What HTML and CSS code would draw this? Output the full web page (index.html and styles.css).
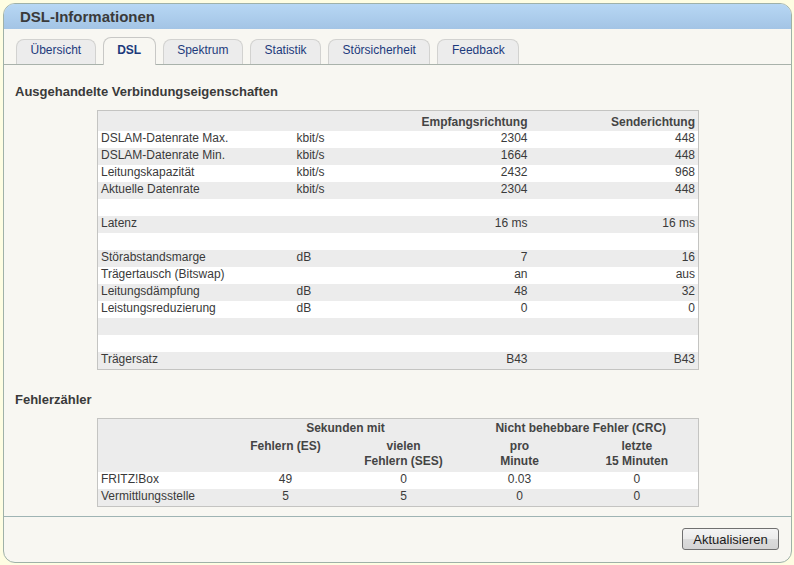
FILE: index.html
```html
<!DOCTYPE html>
<html lang="de">
<head>
<meta charset="utf-8">
<title>DSL-Informationen</title>
<link rel="stylesheet" href="styles.css">
</head>
<body>
<div class="panel">
  <div class="panel-head">DSL-Informationen</div>
  <div class="tabs">
    <div class="tab">Übersicht</div>
    <div class="tab active">DSL</div>
    <div class="tab">Spektrum</div>
    <div class="tab">Statistik</div>
    <div class="tab">Störsicherheit</div>
    <div class="tab">Feedback</div>
  </div>
  <div class="content">
    <h2 class="section-title first">Ausgehandelte Verbindungseigenschaften</h2>
    <table class="grid props">
      <colgroup><col class="c1"><col class="c2"><col class="c3"><col class="c4"></colgroup>
      <tr class="head"><th></th><th></th><th class="r">Empfangsrichtung</th><th class="r">Senderichtung</th></tr>
      <tr><td>DSLAM-Datenrate Max.</td><td>kbit/s</td><td class="r">2304</td><td class="r">448</td></tr>
      <tr><td>DSLAM-Datenrate Min.</td><td>kbit/s</td><td class="r">1664</td><td class="r">448</td></tr>
      <tr><td>Leitungskapazität</td><td>kbit/s</td><td class="r">2432</td><td class="r">968</td></tr>
      <tr><td>Aktuelle Datenrate</td><td>kbit/s</td><td class="r">2304</td><td class="r">448</td></tr>
      <tr><td></td><td></td><td></td><td></td></tr>
      <tr><td>Latenz</td><td></td><td class="r">16 ms</td><td class="r">16 ms</td></tr>
      <tr><td></td><td></td><td></td><td></td></tr>
      <tr><td>Störabstandsmarge</td><td>dB</td><td class="r">7</td><td class="r">16</td></tr>
      <tr><td>Trägertausch (Bitswap)</td><td></td><td class="r">an</td><td class="r">aus</td></tr>
      <tr><td>Leitungsdämpfung</td><td>dB</td><td class="r">48</td><td class="r">32</td></tr>
      <tr><td>Leistungsreduzierung</td><td>dB</td><td class="r">0</td><td class="r">0</td></tr>
      <tr><td></td><td></td><td></td><td></td></tr>
      <tr><td></td><td></td><td></td><td></td></tr>
      <tr><td>Trägersatz</td><td></td><td class="r">B43</td><td class="r">B43</td></tr>
    </table>

    <h2 class="section-title">Fehlerzähler</h2>
    <table class="grid errors">
      <colgroup><col class="e1"><col class="e2"><col class="e3"><col class="e4"><col class="e5"></colgroup>
      <tr class="head h1"><th></th><th colspan="2">Sekunden mit</th><th colspan="2">Nicht behebbare Fehler (CRC)</th></tr>
      <tr class="head h2"><th></th><th>Fehlern (ES)</th><th>vielen<br>Fehlern (SES)</th><th>pro<br>Minute</th><th>letzte<br>15 Minuten</th></tr>
      <tr><td>FRITZ!Box</td><td class="c">49</td><td class="c">0</td><td class="c">0.03</td><td class="c">0</td></tr>
      <tr><td>Vermittlungsstelle</td><td class="c">5</td><td class="c">5</td><td class="c">0</td><td class="c">0</td></tr>
    </table>
  </div>
  <div class="footer">
    <button class="btn" type="button">Aktualisieren</button>
  </div>
</div>
</body>
</html>
```

FILE: styles.css
```css
html, body {
  margin: 0;
  padding: 0;
}
body {
  background: #fefde2;
  font-family: "Liberation Sans", Arial, sans-serif;
  font-size: 12px;
  color: #3a3a3a;
  width: 794px;
  height: 565px;
  overflow: hidden;
}
.panel {
  margin: 3px 0 0 3px;
  width: 787px;
  height: 558px;
  border: 1px solid #9fb1a8;
  border-radius: 12px;
  background: #f8f7f2;
  overflow: hidden;
  display: flex;
  flex-direction: column;
}
.panel-head {
  height: 25px;
  line-height: 25px;
  padding-left: 16px;
  background: linear-gradient(#b7d7f4, #a3c4e5);
  font-size: 15px;
  font-weight: bold;
  color: #3a3a3a;
}
.tabs {
  height: 36px;
  box-sizing: border-box;
  border-bottom: 1px solid #a9b2ab;
  display: flex;
  align-items: flex-end;
  gap: 7px;
  padding-left: 12px;
}
.tab {
  height: 25px;
  box-sizing: border-box;
  padding: 3px 13.5px 0;
  line-height: 14px;
  border: 1px solid #d2d2d0;
  border-bottom: none;
  border-radius: 8px 8px 0 0;
  background: #ececec;
  color: #1c3a7c;
  font-size: 12px;
  white-space: nowrap;
}
.tab.active {
  height: 28px;
  padding-top: 5px;
  margin-bottom: -1px;
  background: #f8f7f2;
  border-color: #c8c8c6;
  font-weight: bold;
}
.content {
  flex: 1;
  padding: 0 11px;
  border-bottom: 1px solid #9fb4b4;
}
.section-title {
  margin: 22px 0 10px;
  font-size: 13px;
  line-height: 16px;
  font-weight: bold;
  color: #3a3a3a;
}
.section-title.first {
  margin-top: 19px;
  margin-bottom: 10px;
}
.grid {
  margin-left: 82px;
  width: 601px;
  border: 1px solid #c4c4c2;
  border-collapse: collapse;
  table-layout: fixed;
}
.grid th, .grid td {
  padding: 0 3px;
  height: 17px;
  line-height: 14px;
  white-space: nowrap;
  font-size: 12px;
}
.grid td {
  padding-bottom: 3px;
  box-sizing: border-box;
}
.grid th {
  font-weight: bold;
  color: #444;
}
.grid tr:nth-child(odd) { background: #ececec; }
.grid tr:nth-child(even) { background: #ffffff; }
.grid .r { text-align: right; }
.grid .c { text-align: center; }
.props tr.head th { height: 19px; padding-top: 1px; }
.props .c1 { width: 196px; }
.props .c2 { width: 100px; }
.props .c3 { width: 137px; }
.props .c4 { width: 168px; }

.errors .e1 { width: 130px; }
.errors .e2 { width: 116px; }
.errors .e3 { width: 120px; }
.errors .e4 { width: 112px; }
.errors .e5 { width: 123px; }
.errors tr.head { background: #ececec; }
.errors tr.h1 th { height: 18px; text-align: center; }
.errors tr.h2 th {
  height: 35px;
  box-sizing: border-box;
  vertical-align: top;
  text-align: center;
  padding-top: 2px;
  line-height: 15px;
}
.errors tr:nth-child(3) { background: #ffffff; }
.errors tr:nth-child(4) { background: #ececec; }

.footer {
  height: 45px;
  flex: none;
  display: flex;
  justify-content: flex-end;
  align-items: flex-start;
  padding: 11px 12px 0 0;
  box-sizing: border-box;
}
.btn {
  width: 97px;
  height: 22px;
  padding: 0;
  border: 1px solid #707070;
  border-radius: 3px;
  background: linear-gradient(#f4f4f4 0%, #ebebeb 50%, #dcdcdc 51%, #d4d4d4 100%);
  font-family: "Liberation Sans", Arial, sans-serif;
  font-size: 13px;
  color: #1a1a1a;
}
```
